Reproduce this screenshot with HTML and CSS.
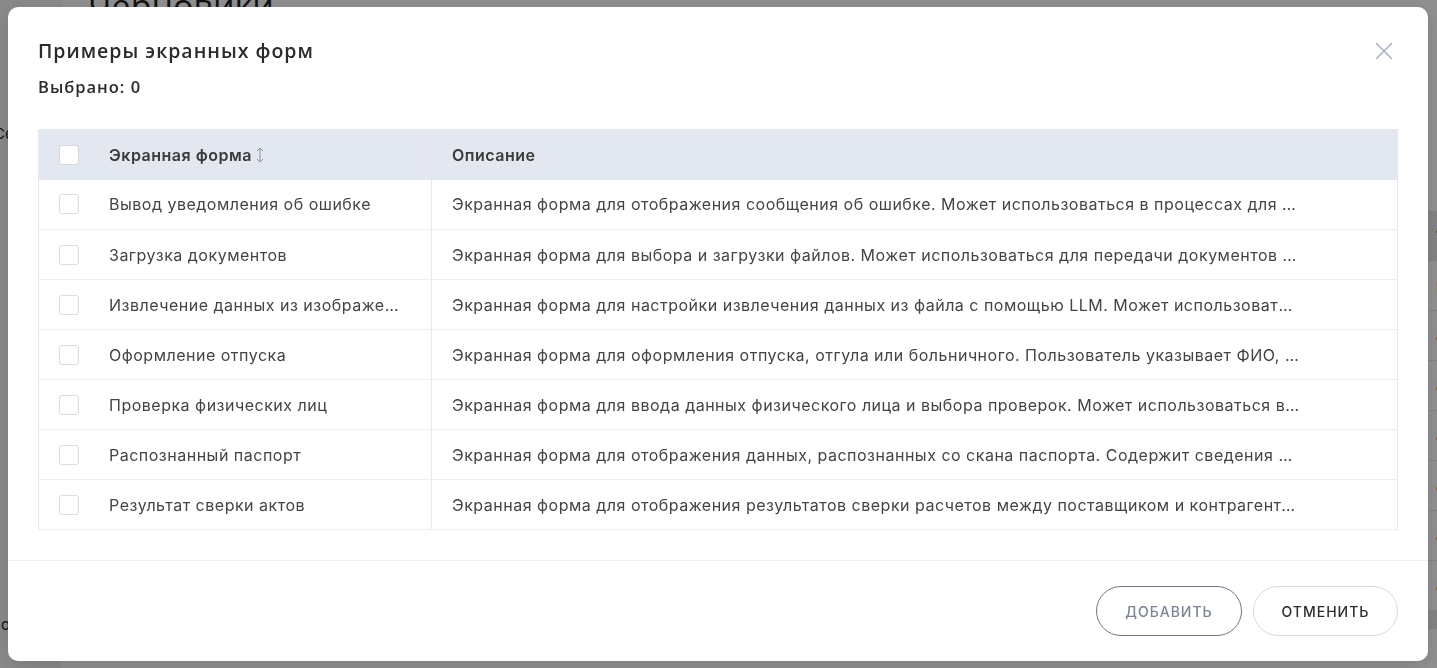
FILE: index.html
```html
<!DOCTYPE html>
<html lang="ru">
<head>
<meta charset="utf-8">
<title>Черновики</title>
<link rel="stylesheet" href="styles.css">
</head>
<body>
<div class="app">
  <aside class="sidebar">
    <div class="side-item side-top">Сервисы</div>
    <div class="side-item side-bottom">Сотрудники</div>
  </aside>
  <main class="page">
    <h1 class="page-title">Черновики</h1>
    <div class="page-table">
      <div class="pt-head">Тип</div>
      <div class="pt-row">имя</div>
      <div class="pt-row">анкета</div>
      <div class="pt-row">акт</div>
      <div class="pt-row">адрес</div>
      <div class="pt-row">анализ</div>
      <div class="pt-row">архив</div>
      <div class="pt-row">агент</div>
      <div class="pt-foot"></div>
    </div>
  </main>
</div>

<div class="overlay">
  <div class="modal" role="dialog" aria-labelledby="modal-title">
    <div class="modal-body">
      <div class="modal-head">
        <h2 id="modal-title" class="modal-title">Примеры экранных форм</h2>
        <button class="close" aria-label="Закрыть">
          <svg width="18" height="18" viewBox="0 0 18 18"><path d="M1 1L17 17M17 1L1 17" stroke="#a9b2c2" stroke-width="1.6" fill="none"/></svg>
        </button>
      </div>
      <div class="selected">Выбрано: 0</div>

      <table class="grid">
        <colgroup><col class="c-name"><col class="c-desc"></colgroup>
        <thead>
          <tr>
            <th><div class="cell-name"><span class="check"></span><span>Экранная форма</span>
              <svg class="sort" width="8" height="16" viewBox="0 0 8 16"><path d="M4 1V15M1 4L4 1L7 4M1 12L4 15L7 12" stroke="#8a93a3" stroke-width="1" fill="none"/></svg></div></th>
            <th><div class="cell-desc">Описание</div></th>
          </tr>
        </thead>
        <tbody>
          <tr>
            <td><div class="cell-name"><span class="check"></span><span class="trunc">Вывод уведомления об ошибке</span></div></td>
            <td><div class="cell-desc"><span class="trunc desc">Экранная форма для отображения сообщения об ошибке. Может использоваться в процессах для информирования пользователя</span></div></td>
          </tr>
          <tr>
            <td><div class="cell-name"><span class="check"></span><span class="trunc">Загрузка документов</span></div></td>
            <td><div class="cell-desc"><span class="trunc desc">Экранная форма для выбора и загрузки файлов. Может использоваться для передачи документов в процесс обработки</span></div></td>
          </tr>
          <tr>
            <td><div class="cell-name"><span class="check"></span><span class="trunc">Извлечение данных из изображения</span></div></td>
            <td><div class="cell-desc"><span class="trunc desc">Экранная форма для настройки извлечения данных из файла с помощью LLM. Может использоваться при распознавании</span></div></td>
          </tr>
          <tr>
            <td><div class="cell-name"><span class="check"></span><span class="trunc">Оформление отпуска</span></div></td>
            <td><div class="cell-desc"><span class="trunc desc">Экранная форма для оформления отпуска, отгула или больничного. Пользователь указывает ФИО, даты и причину</span></div></td>
          </tr>
          <tr>
            <td><div class="cell-name"><span class="check"></span><span class="trunc">Проверка физических лиц</span></div></td>
            <td><div class="cell-desc"><span class="trunc desc">Экранная форма для ввода данных физического лица и выбора проверок. Может использоваться в процессах проверки</span></div></td>
          </tr>
          <tr>
            <td><div class="cell-name"><span class="check"></span><span class="trunc">Распознанный паспорт</span></div></td>
            <td><div class="cell-desc"><span class="trunc desc">Экранная форма для отображения данных, распознанных со скана паспорта. Содержит сведения о владельце</span></div></td>
          </tr>
          <tr>
            <td><div class="cell-name"><span class="check"></span><span class="trunc">Результат сверки актов</span></div></td>
            <td><div class="cell-desc"><span class="trunc desc">Экранная форма для отображения результатов сверки расчетов между поставщиком и контрагентом</span></div></td>
          </tr>
        </tbody>
      </table>
    </div>

    <div class="modal-foot">
      <button class="btn btn-add">Добавить</button>
      <button class="btn btn-cancel">Отменить</button>
    </div>
  </div>
</div>
</body>
</html>
```

FILE: styles.css
```css
* { box-sizing: border-box; }

html, body {
  margin: 0;
  height: 100%;
}

body {
  font-family: Inter, "Liberation Sans", sans-serif;
  color: #3b3b3b;
  overflow: hidden;
}

/* Page underneath the dialog */
.app {
  display: flex;
  height: 668px;
  background: #fff;
}

.sidebar {
  width: 62px;
  flex: none;
  background: #f4f4f4;
  display: flex;
  flex-direction: column;
  padding-top: 124px;
  font-size: 15px;
  color: #222;
}

.side-item { white-space: nowrap; overflow: hidden; text-indent: -6px; }
.side-bottom { margin-top: auto; margin-bottom: 34px; text-indent: -10px; }

.page {
  flex: 1;
  padding-left: 26px;
}

.page-title {
  margin: -17px 0 0;
  font-family: "Open Sans", sans-serif;
  font-weight: 500;
  font-size: 34px;
  color: #222;
}

.page-table {
  margin-left: auto;
  margin-top: 182px;
  width: 300px;
  margin-right: -10px;
  font-size: 15px;
  color: #222;
}

.pt-head {
  height: 50px;
  background: #e6e8ec;
  display: flex;
  align-items: center;
  padding-left: 289px;
  font-weight: 600;
}

.pt-row {
  height: 50px;
  border-bottom: 1px solid #e6e6e6;
  display: flex;
  align-items: center;
  padding-left: 289px;
  white-space: nowrap;
  overflow: hidden;
}

.pt-foot {
  height: 18px;
  background: #e6e8ec;
}

/* Dimmed overlay */
.overlay {
  position: fixed;
  inset: 0;
  background: rgba(0, 0, 0, 0.44);
  padding: 7px 9px 7px 8px;
  display: flex;
}

.modal {
  flex: 1;
  background: #fff;
  border-radius: 10px;
  display: flex;
  flex-direction: column;
  box-shadow: 0 4px 16px rgba(0, 0, 0, 0.12);
}

.modal-body {
  padding: 30px 30px 0;
  flex: 1;
}

.modal-head {
  display: flex;
  align-items: flex-start;
  justify-content: space-between;
}

.modal-title {
  margin: 0;
  font-family: "Open Sans", sans-serif;
  font-weight: 600;
  font-size: 19.5px;
  letter-spacing: 1px;
  line-height: 28px;
  color: #2b2b2b;
}

.close {
  border: 0;
  background: none;
  padding: 0;
  margin: 5px 5px 0 0;
  cursor: pointer;
  line-height: 0;
}

.selected {
  margin-top: 12px;
  font-family: "Open Sans", sans-serif;
  font-weight: 600;
  font-size: 16.5px;
  letter-spacing: 1px;
  line-height: 20px;
  color: #2b2b2b;
}

/* Table of forms */
.grid {
  margin-top: 32px;
  width: 100%;
  border-collapse: collapse;
  table-layout: fixed;
  border: 1px solid #e4e7ed;
  font-size: 16px;
  letter-spacing: 0.5px;
}

.c-name { width: 393px; }

.grid th,
.grid td {
  height: 50px;
  padding: 0;
  text-align: left;
  border-bottom: 1px solid #eceef2;
}

.grid th + th,
.grid td + td {
  border-left: 1px solid #e4e7ed;
}

.grid thead th {
  background: #e3e7ef;
  font-weight: 600;
  color: #3a3a3a;
  border-bottom: 0;
}

.grid td { color: #444; }

.cell-name {
  display: flex;
  align-items: center;
  gap: 30px;
  padding: 0 27px 0 20px;
  min-width: 0;
}

.cell-name .trunc { flex: 1; min-width: 0; }

.cell-desc {
  padding: 0 20px;
}

.trunc {
  display: block;
  white-space: nowrap;
  overflow: hidden;
  text-overflow: ellipsis;
}

.desc { max-width: 848px; }

.check {
  flex: none;
  width: 20px;
  height: 20px;
  border: 1px solid #dcdcdc;
  border-radius: 3px;
  background: #fff;
}

thead .check { border-color: #d5d8de; }

.sort { margin-left: -26px; flex: none; }

/* Footer */
.modal-foot {
  border-top: 1px solid #eef0f3;
  display: flex;
  justify-content: flex-end;
  gap: 11px;
  padding: 25px 30px;
}

.btn {
  height: 50px;
  border-radius: 25px;
  background: #fff;
  font-family: Inter, sans-serif;
  font-weight: 500;
  font-size: 14px;
  letter-spacing: 1px;
  text-transform: uppercase;
  cursor: pointer;
}

.btn-add {
  width: 146px;
  border: 1px solid #6e7685;
  color: #7c8494;
}

.btn-cancel {
  width: 145px;
  border: 1px solid #d6dbe4;
  color: #2e2e2e;
}
```
